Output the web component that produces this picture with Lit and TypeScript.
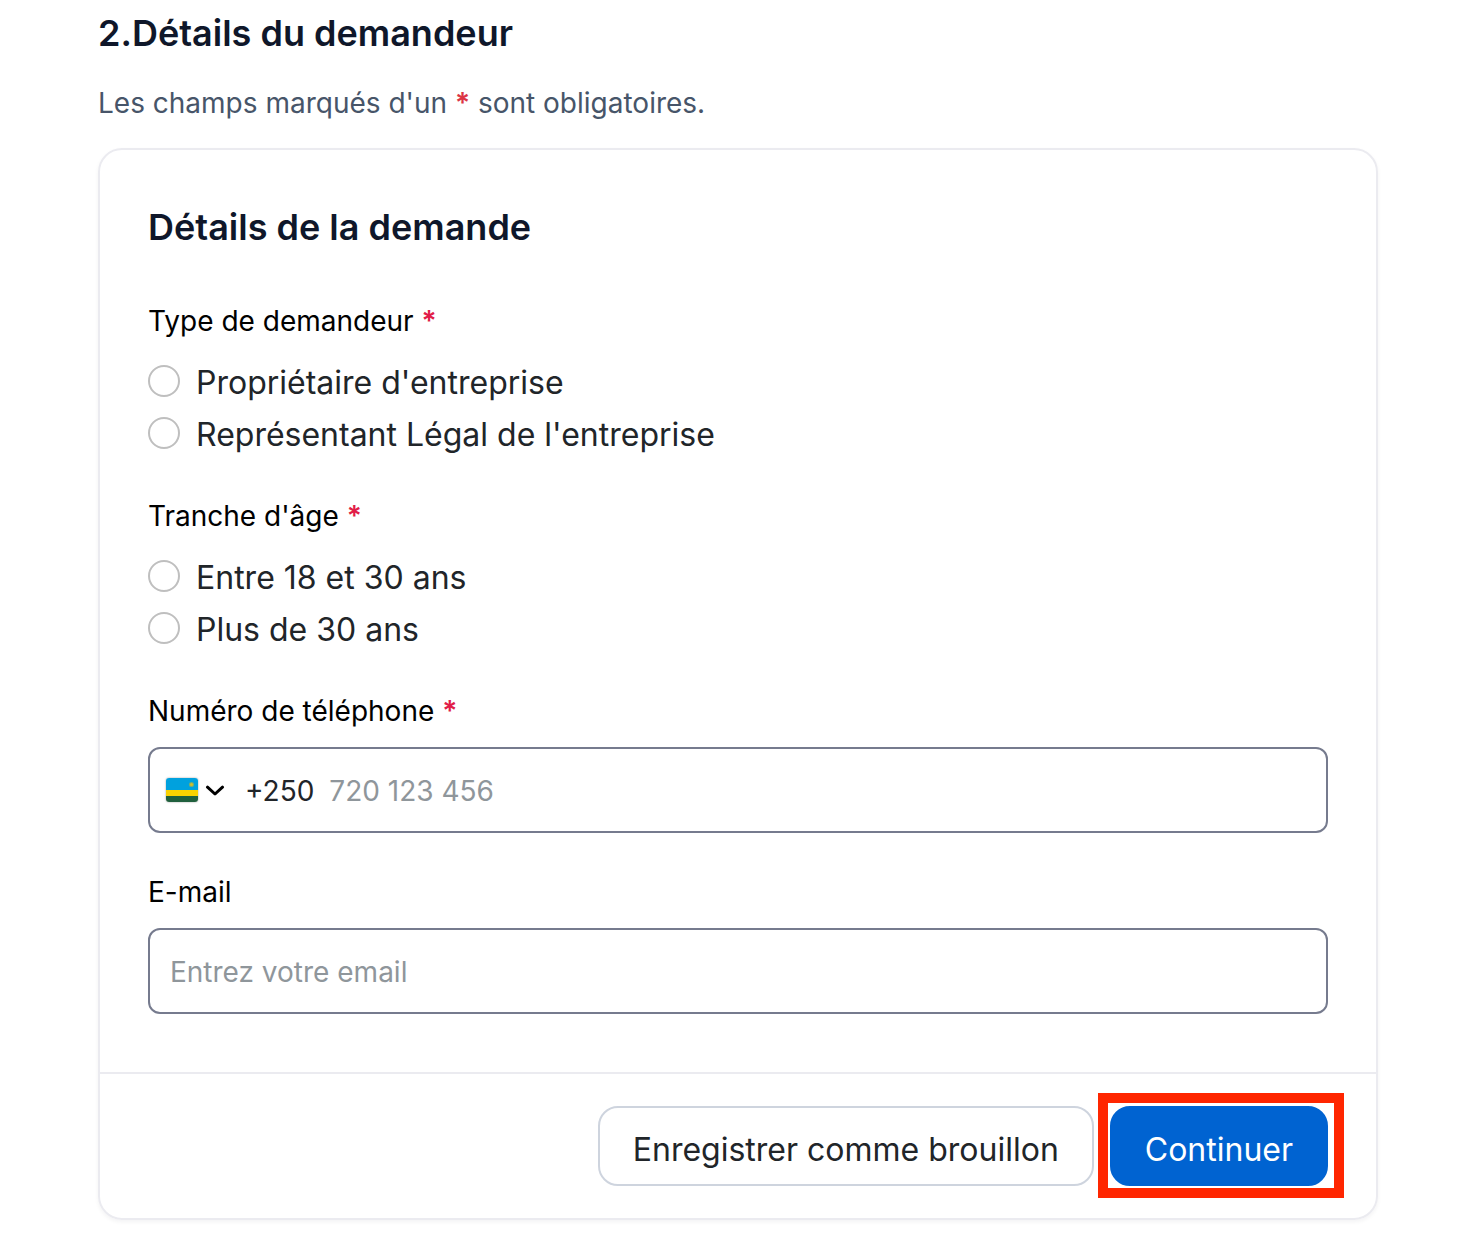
import { LitElement, html, css, svg } from "lit";
import { customElement } from "lit/decorators.js";

interface Choice {
  id: string;
  label: string;
}

const applicantTypes: Choice[] = [
  { id: "owner", label: "Propriétaire d'entreprise" },
  { id: "legal", label: "Représentant Légal de l'entreprise" },
];

const ageRanges: Choice[] = [
  { id: "young", label: "Entre 18 et 30 ans" },
  { id: "adult", label: "Plus de 30 ans" },
];

const flag = svg`
  <svg class="flag" viewBox="0 0 32 24" aria-hidden="true">
    <rect width="32" height="12" fill="#00a1de" />
    <rect y="12" width="32" height="6" fill="#fad201" />
    <rect y="18" width="32" height="6" fill="#20603d" />
    <circle cx="25.500" cy="6.500" r="2.600" fill="#6fae7a" />
    <circle cx="25.500" cy="6.500" r="1.500" fill="#d5be28" />
  </svg>`;

const chevron = svg`
  <svg class="chevron" viewBox="0 0 20 12" aria-hidden="true">
    <path d="M2.500 3.200 10 10l7.500-6.800" fill="none" stroke="#000" stroke-width="3"
      stroke-linecap="round" stroke-linejoin="round" />
  </svg>`;

@customElement("app-root")
export class AppRoot extends LitElement {
  static styles = css`
    :host {
      display: block;
      font-family: Inter, "Open Sans", sans-serif;
      color: #212529;
      background: #fff;
    }
    * {
      box-sizing: border-box;
    }
    .page {
      padding: 9px 103px 22px 98px;
    }
    h1,
    h2 {
      margin: 0;
      font-size: 36px;
      line-height: 48px;
      font-weight: 600;
      color: #0f172a;
    }
    .hint {
      margin: 26px 0 25px;
      font-size: 28px;
      line-height: 40px;
      color: #475569;
    }
    .required {
      font-weight: 600;
      color: #e11d48;
    }
    .hint .required {
      color: #dc3545;
    }
    .card {
      border: 2px solid #ebebf0;
      border-radius: 24px;
      box-shadow: 0 2px 4px rgba(16, 24, 40, 0.05);
    }
    .fields {
      display: flex;
      flex-direction: column;
      gap: 39px;
      padding: 53px 48px 58px;
    }
    h2 {
      margin-bottom: 11px;
    }
    .group {
      display: flex;
      flex-direction: column;
      margin: 0;
      padding: 0;
      border: 0;
      min-width: 0;
    }
    .label {
      display: block;
      padding: 0;
      margin-bottom: 16px;
      font-size: 28px;
      line-height: 40px;
      color: #000;
    }
    .choices {
      display: flex;
      flex-direction: column;
      gap: 4px;
    }
    .choice {
      display: flex;
      align-items: center;
      gap: 16px;
      font-size: 32px;
      line-height: 44px;
    }
    .choice span {
      padding-top: 4px;
    }
    .choice input {
      appearance: none;
      flex: none;
      width: 32px;
      height: 32px;
      margin: 0;
      border: 2px solid #bfbfbf;
      border-radius: 50%;
      background: #fff;
    }
    .choice input:checked {
      border: 10px solid #0063d1;
    }
    .box {
      display: flex;
      align-items: center;
      height: 86px;
      border: 2px solid #767b8e;
      border-radius: 12px;
      background: #fff;
      font-size: 28px;
    }
    .box input {
      flex: 1;
      min-width: 0;
      height: 100%;
      padding: 2px 0 0;
      border: 0;
      outline: 0;
      background: none;
      font: inherit;
      color: inherit;
    }
    .box input::placeholder {
      color: #8f969b;
      opacity: 1;
    }
    .email {
      padding: 0 20px;
    }
    .phone {
      padding: 0 16px;
    }
    .country {
      display: flex;
      align-items: center;
      gap: 7px;
      padding: 0;
      margin-right: 20px;
      border: 0;
      background: none;
    }
    .flag {
      width: 32px;
      height: 24px;
      border-radius: 3px;
      box-shadow: 0 0 2px rgba(0, 0, 0, 0.4);
    }
    .chevron {
      width: 20px;
      height: 12px;
    }
    .prefix {
      padding-top: 2px;
      margin-right: 15px;
    }
    .actions {
      display: flex;
      justify-content: flex-end;
      gap: 16px;
      padding: 32px 48px;
      border-top: 2px solid #ebebf0;
    }
    .button {
      height: 80px;
      padding: 6px 33px 0;
      border: 2px solid #ced4de;
      border-radius: 20px;
      background: #fff;
      font: inherit;
      font-size: 32px;
      color: #212529;
    }
    .primary {
      border-color: #0063d1;
      background: #0063d1;
      color: #fff;
    }
    .marked {
      position: relative;
    }
    .marker {
      position: absolute;
      inset: -13px -16px -12px -12px;
      border: 10px solid #ff2600;
      pointer-events: none;
    }
  `;

  private choices(name: string, title: string, options: Choice[]) {
    return html`
      <fieldset class="group">
        <legend class="label">${title} <span class="required">*</span></legend>
        <div class="choices">
          ${options.map(
            (option) => html`
              <label class="choice">
                <input type="radio" name=${name} value=${option.id} />
                <span>${option.label}</span>
              </label>
            `
          )}
        </div>
      </fieldset>
    `;
  }

  render() {
    return html`
      <main class="page">
        <h1>2.Détails du demandeur</h1>
        <p class="hint">
          Les champs marqués d'un <span class="required">*</span> sont obligatoires.
        </p>
        <form class="card" @submit=${(event: Event) => event.preventDefault()}>
          <div class="fields">
            <h2>Détails de la demande</h2>
            ${this.choices("applicant", "Type de demandeur", applicantTypes)}
            ${this.choices("age", "Tranche d'âge", ageRanges)}
            <div class="group">
              <label class="label" for="phone"
                >Numéro de téléphone <span class="required">*</span></label
              >
              <div class="box phone">
                <button class="country" type="button" aria-label="Indicatif du pays">
                  ${flag}${chevron}
                </button>
                <span class="prefix">+250</span>
                <input id="phone" type="tel" placeholder="720 123 456" />
              </div>
            </div>
            <div class="group">
              <label class="label" for="email">E-mail</label>
              <div class="box email">
                <input id="email" type="email" placeholder="Entrez votre email" />
              </div>
            </div>
          </div>
          <div class="actions">
            <button class="button" type="button">Enregistrer comme brouillon</button>
            <div class="marked">
              <button class="button primary" type="submit">Continuer</button>
              <div class="marker"></div>
            </div>
          </div>
        </form>
      </main>
    `;
  }
}
